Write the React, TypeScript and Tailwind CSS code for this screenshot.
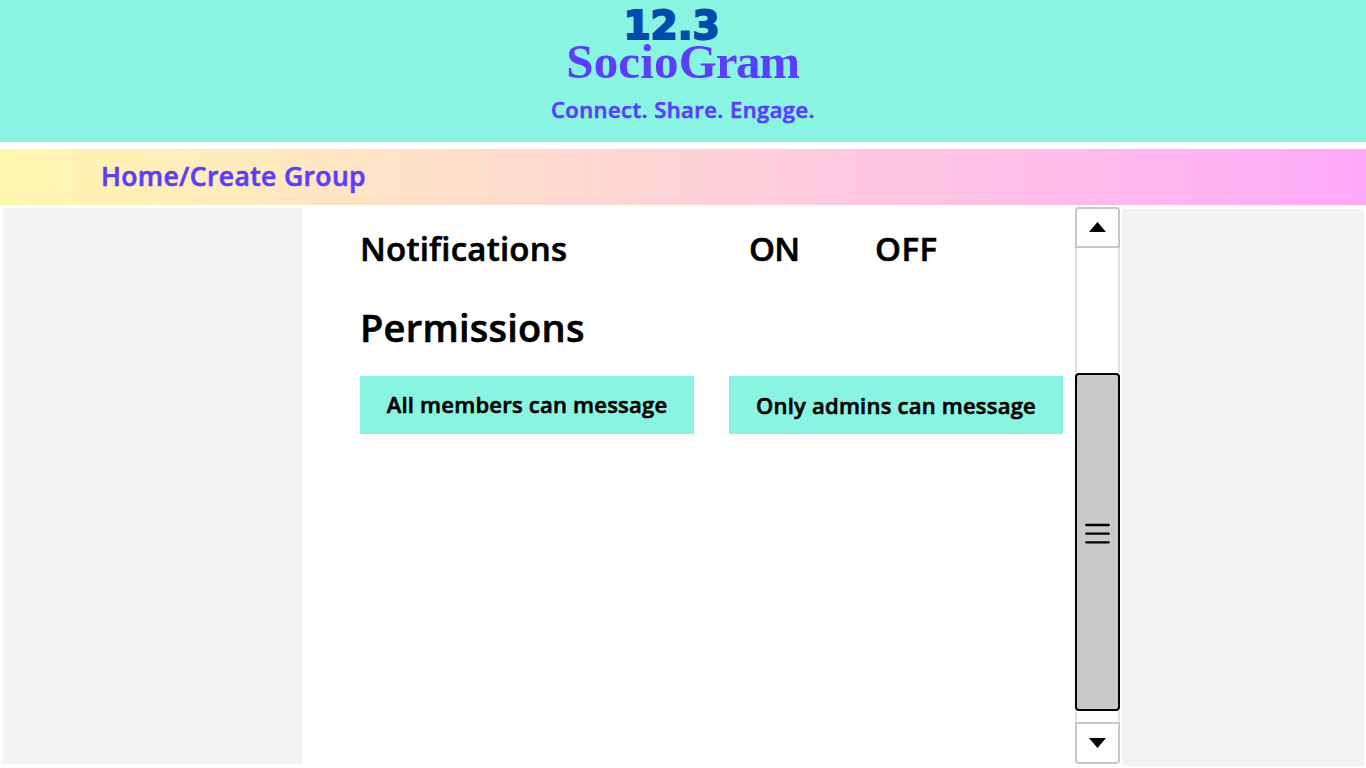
const sans = "font-['Open_Sans','Noto_Sans',sans-serif] font-semibold whitespace-nowrap [-webkit-text-stroke:0.6px_currentColor]";

function Grip() {
  return (
    <svg className="mb-[17px]" width="25" height="22" viewBox="0 0 25 22" fill="none" stroke="#000" strokeWidth="2.3" strokeLinecap="round">
      <path d="M1.3 2H23.7M1.3 10.7H23.7M1.3 19.3H23.7" />
    </svg>
  );
}

function Scrollbar() {
  return (
    <div className="mt-[2px] flex h-[557px] w-[45px] flex-col">
      <div className="flex h-[41px] items-center justify-center rounded-t-[4px] border-2 border-[#c8c8c8] pb-[2px]">
        <svg width="17" height="10" viewBox="0 0 17 10"><path d="M8.5 0L17 10H0Z" /></svg>
      </div>
      <div className="h-[125px] border-x-2 border-[#e0e0e0]" />
      <div className="flex h-[338px] items-center justify-center rounded-[4px] border-2 border-black bg-[#c9c9c7]">
        <Grip />
      </div>
      <div className="h-[11px] border-x-2 border-[#e0e0e0]" />
      <div className="flex h-[42px] items-center justify-center rounded-b-[4px] border-2 border-[#c8c8c8]">
        <svg width="17" height="10" viewBox="0 0 17 10"><path d="M0 0H17L8.5 10Z" /></svg>
      </div>
    </div>
  );
}

export default function App() {
  return (
    <div className="flex h-[768px] w-[1366px] flex-col overflow-hidden bg-white">
      <header className="flex h-[142px] shrink-0 flex-col items-center bg-[#8af4e2]">
        <div className="mt-[6px] mr-[23px] h-[35px] font-['DejaVu_Sans',sans-serif] text-[39px] leading-[40px] font-bold whitespace-nowrap text-[#004aad] [-webkit-text-stroke:2px_#004aad]">12.3</div>
        <h1 className="mr-[1px] h-[41px] font-['Liberation_Serif',serif] text-[49px] leading-[41px] font-bold whitespace-nowrap text-[#5a3dff]">
          <span className="tracking-[0.2px]">Socio</span>
          <span className="tracking-[-1.3px]">Gram</span>
        </h1>
        <p className={`${sans} mt-[11px] text-[22px] leading-[32px] tracking-[0.43px] text-[#5a3dff]`}>Connect. Share. Engage.</p>
      </header>
      <nav className="mt-[7px] flex h-[56px] shrink-0 items-start bg-linear-to-r from-[#fff7ad] to-[#ffa9f9] pl-[101px]">
        <span className={`${sans} text-[26.5px] leading-[55px] tracking-[0.37px] text-[#5a3dff]`}>Home/Create Group</span>
      </nav>
      <div className="flex flex-1">
        <aside className="mt-[3px] ml-[3px] h-[556px] w-[299px] bg-[#f3f3f3]" />
        <main className="w-[773px] pt-[21px] pl-[58px] text-black">
          <div className="flex h-[46px] items-center">
            <h2 className={`${sans} w-[389px] text-[33px] tracking-[0.22px]`}>Notifications</h2>
            <span className={`${sans} w-[126px] text-[33px] tracking-[-0.6px]`}>ON</span>
            <span className={`${sans} text-[33px] tracking-[0.5px]`}>OFF</span>
          </div>
          <h2 className={`${sans} mt-[27px] text-[38px] leading-[56px] tracking-[0.25px]`}>Permissions</h2>
          <div className="mt-[21px] flex gap-[35px]">
            <button className="flex h-[58px] w-[334px] items-center justify-center bg-[#8af4e2]">
              <span className={`${sans} pb-[2px] text-[22px] tracking-[0.22px]`}>All members can message</span>
            </button>
            <button className="flex h-[58px] w-[334px] items-center justify-center bg-[#8af4e2]">
              <span className={`${sans} text-[22px] tracking-[0.22px]`}>Only admins can message</span>
            </button>
          </div>
        </main>
        <Scrollbar />
        <aside className="mt-[4px] ml-[2px] h-[557px] w-[242px] bg-[#f3f3f3]" />
      </div>
    </div>
  );
}
